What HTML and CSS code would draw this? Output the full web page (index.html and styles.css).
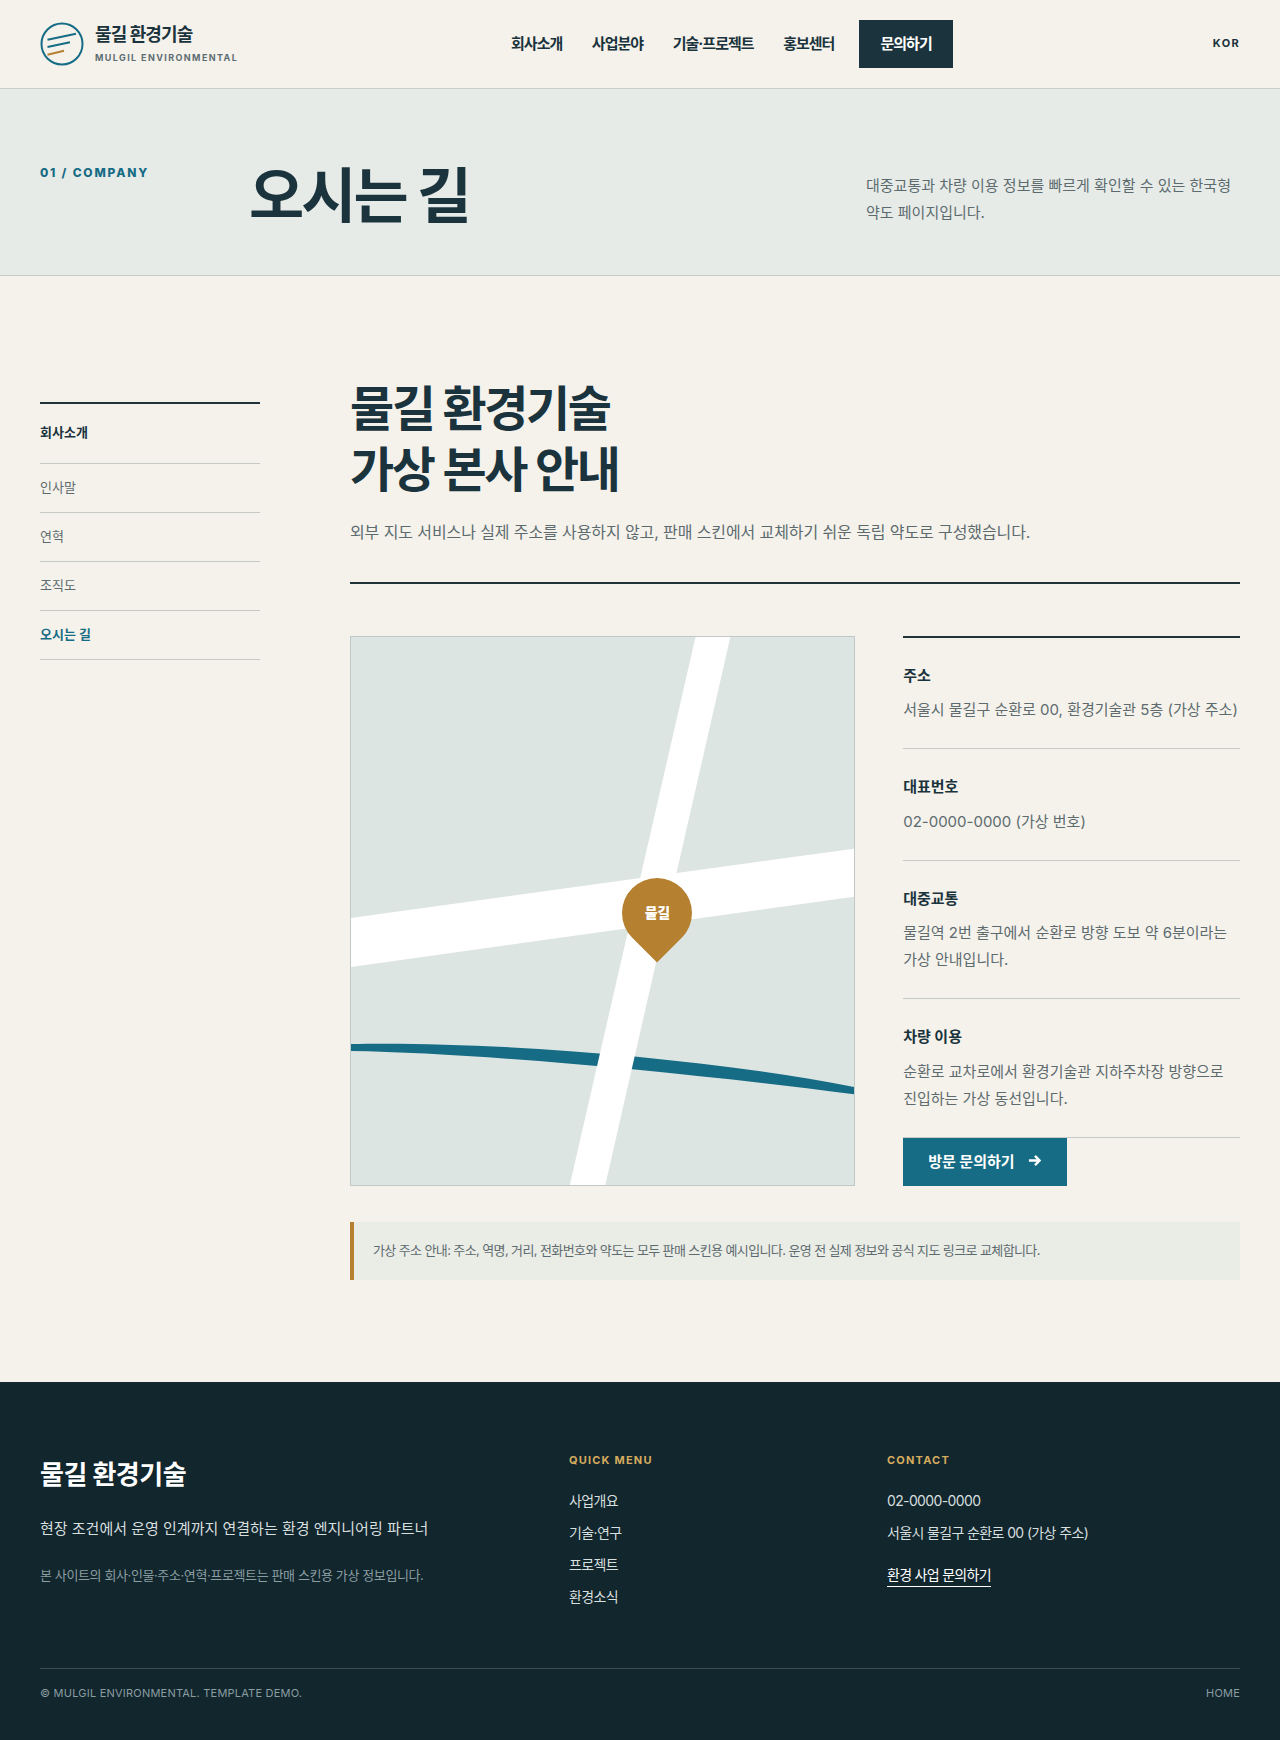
FILE: index.html
```html
<!DOCTYPE html>
<html lang="ko">
<head>
    <meta charset="UTF-8">
    <meta name="viewport" content="width=device-width, initial-scale=1.0">
    <title>오시는 길 | 물길 환경기술</title>
    <link rel="stylesheet" href="styles.css">
</head>
<body>

<header class="site-header">
    <a class="brand" href="#">
        <svg class="brand-mark" viewBox="0 0 44 44" width="44" height="44" aria-hidden="true">
            <circle cx="22" cy="22" r="20.5" fill="none" stroke="#176c85" stroke-width="2"/>
            <path d="M7.5 17.7 36 11.7M7.5 25 30 20.3" fill="none" stroke="#176c85" stroke-width="2"/>
            <path d="M7.5 32.7 24 28.7" fill="none" stroke="#b5802f" stroke-width="2"/>
        </svg>
        <span class="brand-text">
            <strong>물길 환경기술</strong>
            <small>MULGIL ENVIRONMENTAL</small>
        </span>
    </a>
    <nav class="main-nav">
        <a href="#">회사소개</a>
        <a href="#">사업분야</a>
        <a href="#">기술·프로젝트</a>
        <a href="#">홍보센터</a>
        <a class="nav-cta" href="#">문의하기</a>
    </nav>
    <div class="lang">KOR</div>
</header>

<section class="page-hero">
    <div class="eyebrow">01 / COMPANY</div>
    <h1>오시는 길</h1>
    <p>대중교통과 차량 이용 정보를 빠르게 확인할 수 있는 한국형 약도 페이지입니다.</p>
</section>

<main class="page-body">
    <aside class="side-nav">
        <div class="side-title">회사소개</div>
        <a href="#">인사말</a>
        <a href="#">연혁</a>
        <a href="#">조직도</a>
        <a class="active" href="#">오시는 길</a>
    </aside>

    <div class="content">
        <div class="content-head">
            <h2>물길 환경기술<br>가상 본사 안내</h2>
            <p>외부 지도 서비스나 실제 주소를 사용하지 않고, 판매 스킨에서 교체하기 쉬운 독립 약도로 구성했습니다.</p>
        </div>

        <div class="location">
            <div class="map">
                <svg class="map-art" viewBox="0 0 503 548" preserveAspectRatio="none" aria-hidden="true">
                    <path d="M0 407C120 404 340 418 503 450L503 457.3C340 436 130 416 0 414Z" fill="#176c85"/>
                    <polygon points="0,281 503,211.6 503,259.7 0,330" fill="#fff"/>
                    <polygon points="344.4,0 379.2,0 254.2,548 218.7,548" fill="#fff"/>
                </svg>
                <div class="pin"><span>물길</span></div>
            </div>

            <div class="info">
                <dl class="info-list">
                    <div class="info-row">
                        <dt>주소</dt>
                        <dd>서울시 물길구 순환로 00, 환경기술관 5층 (가상 주소)</dd>
                    </div>
                    <div class="info-row">
                        <dt>대표번호</dt>
                        <dd>02-0000-0000 (가상 번호)</dd>
                    </div>
                    <div class="info-row">
                        <dt>대중교통</dt>
                        <dd>물길역 2번 출구에서 순환로 방향 도보 약 6분이라는 가상 안내입니다.</dd>
                    </div>
                    <div class="info-row">
                        <dt>차량 이용</dt>
                        <dd>순환로 교차로에서 환경기술관 지하주차장 방향으로 진입하는 가상 동선입니다.</dd>
                    </div>
                </dl>
                <a class="visit-btn" href="#">방문 문의하기
                    <svg viewBox="0 0 14 14" width="13" height="13" aria-hidden="true">
                        <path d="M1 7H12.5M7.5 2 12.5 7 7.5 12" fill="none" stroke="#fff" stroke-width="2.6"/>
                    </svg>
                </a>
            </div>
        </div>

        <p class="notice">가상 주소 안내: 주소, 역명, 거리, 전화번호와 약도는 모두 판매 스킨용 예시입니다. 운영 전 실제 정보와 공식 지도 링크로 교체합니다.</p>
    </div>
</main>

<footer class="site-footer">
    <div class="footer-top">
        <div class="footer-about">
            <h3>물길 환경기술</h3>
            <p class="footer-desc">현장 조건에서 운영 인계까지 연결하는 환경 엔지니어링 파트너</p>
            <p class="footer-small">본 사이트의 회사·인물·주소·연혁·프로젝트는 판매 스킨용 가상 정보입니다.</p>
        </div>
        <div class="footer-col">
            <h4>QUICK MENU</h4>
            <a href="#">사업개요</a>
            <a href="#">기술·연구</a>
            <a href="#">프로젝트</a>
            <a href="#">환경소식</a>
        </div>
        <div class="footer-col">
            <h4>CONTACT</h4>
            <span>02-0000-0000</span>
            <span>서울시 물길구 순환로 00 (가상 주소)</span>
            <a class="footer-link" href="#">환경 사업 문의하기</a>
        </div>
    </div>
    <div class="footer-bottom">
        <span>© MULGIL ENVIRONMENTAL. TEMPLATE DEMO.</span>
        <a href="#">HOME</a>
    </div>
</footer>

</body>
</html>
```

FILE: styles.css
```css
* {
    box-sizing: border-box;
}
body {
    margin: 0;
    background-color: #f5f2eb;
    color: #1a333c;
    font-family: Inter, "Noto Sans CJK KR", sans-serif;
    font-size: 16px;
}
a {
    color: inherit;
    text-decoration: none;
}
h1, h2, h3, h4, p, dl, dd {
    margin: 0;
}

/* header */
.site-header {
    display: grid;
    grid-template-columns: 471px auto 1fr;
    align-items: center;
    height: 89px;
    padding: 0 40px;
    border-bottom: 1px solid #c9cec9;
}
.brand {
    display: flex;
    align-items: center;
    gap: 11px;
}
.brand-mark {
    display: block;
}
.brand-text {
    margin-top: -3px;
}
.brand-text strong {
    display: block;
    font-size: 18px;
    line-height: 28px;
    font-weight: 700;
    letter-spacing: -0.05em;
}
.brand-text small {
    display: block;
    margin-top: 2px;
    font-size: 9px;
    line-height: 14px;
    font-weight: 700;
    letter-spacing: 0.155em;
    color: #5d6d72;
}
.main-nav {
    display: flex;
    align-items: center;
    gap: 29.5px;
    font-size: 15px;
    line-height: 24px;
    font-weight: 700;
    letter-spacing: -0.065em;
}
.nav-cta {
    margin-left: -5px;
    padding: 0 21.5px;
    line-height: 48px;
    background-color: #1a333c;
    color: #fff;
}
.lang {
    justify-self: end;
    margin-top: -2px;
    font-size: 11px;
    font-weight: 700;
    letter-spacing: 0.12em;
}

/* page title */
.page-hero {
    display: grid;
    grid-template-columns: 209px 617px 1fr;
    align-items: start;
    height: 187px;
    padding: 72px 40px 0;
    background-color: #e7ebe8;
    border-bottom: 1px solid #c5cdc8;
}
.eyebrow {
    font-size: 12px;
    line-height: 24px;
    font-weight: 800;
    letter-spacing: 0.15em;
    color: #176c85;
}
.page-hero h1 {
    font-size: 60px;
    line-height: 70px;
    font-weight: 700;
    letter-spacing: -0.05em;
}
.page-hero p {
    padding-top: 11px;
    font-size: 15px;
    line-height: 27px;
    color: #5d6b6f;
}

/* body */
.page-body {
    display: grid;
    grid-template-columns: 220px 1fr;
    gap: 90px;
    padding: 102px 40px 102px;
}
.side-nav {
    align-self: start;
    margin-top: 24px;
    border-top: 2px solid #1f3339;
}
.side-nav a, .side-title {
    display: block;
    height: 49px;
    line-height: 47px;
    border-bottom: 1px solid #c6cac5;
    font-size: 13px;
    color: #5d6b6f;
}
.side-nav .side-title {
    height: 60px;
    line-height: 56px;
    font-weight: 700;
    color: #1a333c;
}
.side-nav .active {
    font-weight: 700;
    color: #176c85;
}
.content-head {
    padding-bottom: 36px;
    border-bottom: 2px solid #1f3339;
}
.content-head h2 {
    font-size: 48px;
    line-height: 61px;
    font-weight: 700;
    letter-spacing: -0.05em;
}
.content-head p {
    margin-top: 18px;
    font-size: 16px;
    line-height: 28px;
    letter-spacing: -0.1px;
    color: #5d6b6f;
}
.location {
    display: grid;
    grid-template-columns: 1.5fr 1fr;
    gap: 48px;
    margin-top: 52px;
}
.map {
    position: relative;
    background-color: #dde5e3;
    border: 1px solid #c0c9c7;
    overflow: hidden;
}
.map-art {
    position: absolute;
    inset: 0;
    width: 100%;
    height: 100%;
}
.pin {
    position: absolute;
    left: 271px;
    top: 241px;
    display: flex;
    align-items: center;
    justify-content: center;
    width: 70px;
    height: 70px;
    background-color: #b5802f;
    border-radius: 50% 50% 0 50%;
    transform: rotate(45deg);
}
.pin span {
    transform: rotate(-45deg) translateY(-1px);
    font-size: 14px;
    font-weight: 800;
    letter-spacing: -0.03em;
    color: #fff;
}
.info-list {
    border-top: 2px solid #1f3339;
}
.info-row {
    padding: 24px 0;
    border-bottom: 1px solid #c6cac5;
}
.info-row dt {
    margin-bottom: 7px;
    font-size: 15px;
    line-height: 27.2px;
    font-weight: 700;
}
.info-row dd {
    padding-bottom: 1px;
    font-size: 15px;
    line-height: 27.2px;
    color: #5d6b6f;
}
.visit-btn {
    display: inline-flex;
    align-items: center;
    gap: 13px;
    height: 48px;
    padding: 0 26px 3px 25px;
    background-color: #176c85;
    color: #fff;
    font-size: 15px;
    font-weight: 700;
    vertical-align: top;
}
.notice {
    margin-top: 36px;
    padding: 16px 20px 18px 19px;
    background-color: #eaece6;
    border-left: 4px solid #b5802f;
    font-size: 13px;
    line-height: 24px;
    letter-spacing: -0.047em;
    color: #5d6b6f;
}

/* footer */
.site-footer {
    height: 358px;
    padding: 68px 40px 0;
    background-color: #11262d;
    color: #fff;
}
.footer-top {
    display: grid;
    grid-template-columns: 529px 318px 1fr;
    height: 219px;
    border-bottom: 1px solid #3a4e54;
}
.footer-about h3 {
    padding-top: 3px;
    font-size: 26px;
    line-height: 44px;
    font-weight: 700;
    letter-spacing: -0.02em;
}
.footer-desc {
    margin-top: 18px;
    font-size: 15px;
    line-height: 28px;
    color: #d7dfdf;
}
.footer-small {
    margin-top: 20px;
    font-size: 13px;
    line-height: 24px;
    letter-spacing: -0.03em;
    color: #8b9da1;
}
.footer-col {
    display: flex;
    flex-direction: column;
    align-items: flex-start;
    gap: 8px;
    font-size: 14px;
    line-height: 24px;
    letter-spacing: -0.045em;
    color: #d7dfdf;
}
.footer-col h4 {
    margin: 0 0 11px;
    font-size: 11px;
    line-height: 20px;
    font-weight: 700;
    letter-spacing: 1.2px;
    color: #d6ab5e;
}
.footer-col .footer-link {
    margin-top: 11px;
    line-height: 22px;
    border-bottom: 1px solid #fff;
    letter-spacing: -0.05em;
    color: #fff;
}
.footer-bottom {
    display: flex;
    justify-content: space-between;
    padding-top: 13px;
    font-size: 11px;
    line-height: 22px;
    letter-spacing: 0.02em;
    color: #8b9da1;
}
```
